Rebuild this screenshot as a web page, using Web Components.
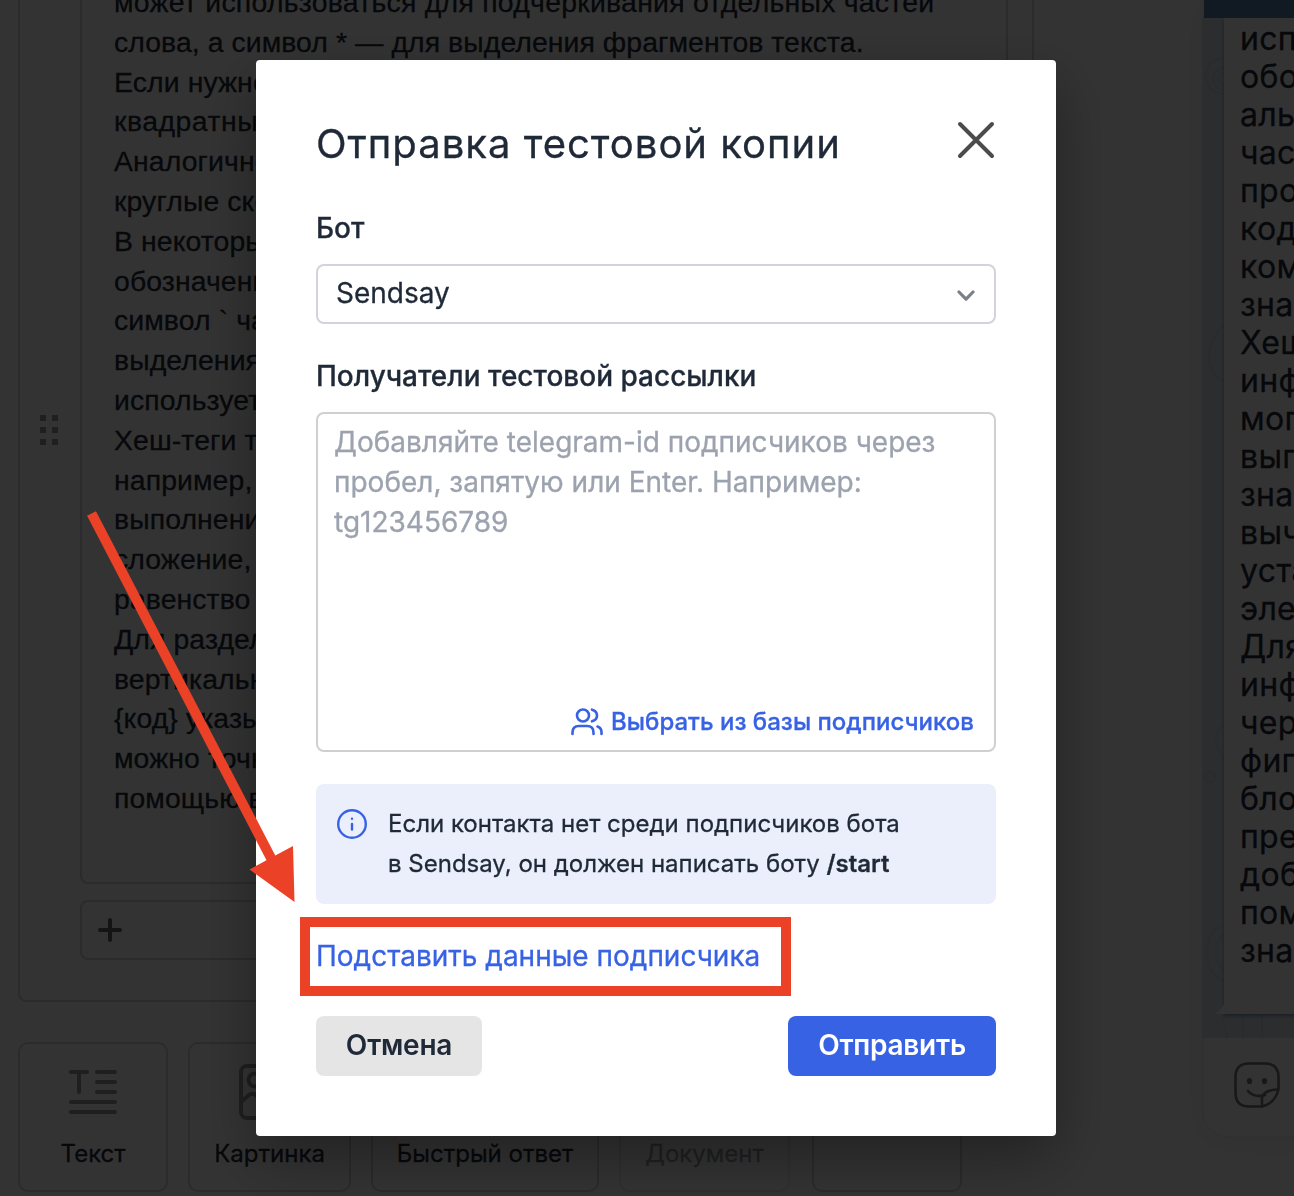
<!DOCTYPE html>
<html lang="ru">
<head>
<meta charset="utf-8">
<title>Отправка тестовой копии</title>
<style>
  html, body { margin: 0; height: 100%; overflow: hidden; }
  body {
    background: #fff;
    color: #1f2937;
    font-family: Inter, "Liberation Sans", sans-serif;
    -webkit-font-smoothing: antialiased;
    -webkit-text-stroke: .3px currentColor;
  }
</style>
</head>
<body>
<app-page>
  <message-editor slot="editor">
    <p style="letter-spacing:.26px">может использоваться для подчеркивания отдельных частей</p>
    <p style="letter-spacing:.07px">слова, а символ * — для выделения фрагментов текста.</p>
    <p>Если нужно</p>
    <p style="letter-spacing:.5px">квадратные</p>
    <p>Аналогично</p>
    <p>круглые скобки</p>
    <p>В некоторых</p>
    <p>обозначения</p>
    <p>символ ` часто</p>
    <p>выделения</p>
    <p>используется</p>
    <p>Хеш-теги также</p>
    <p>например,</p>
    <p>выполнение</p>
    <p>сложение,</p>
    <p>равенство</p>
    <p>Для разделения</p>
    <p>вертикальный</p>
    <p>{код} указывает</p>
    <p>можно точно</p>
    <p>помощью вер</p>
  </message-editor>
  <block-tile slot="tiles" style="width:150px">
    <svg slot="icon" width="48" height="44" viewBox="0 0 48 44" fill="none" stroke="#999" stroke-width="4" stroke-linecap="round"><path d="M2 2h16M10 2v20M28 2h18M28 12h18M28 22h18M2 32h44M2 42h44"/></svg>
    Текст
  </block-tile>
  <block-tile slot="tiles" style="width:163px">
    <svg slot="icon" width="62" height="56" viewBox="0 0 62 56" fill="none" stroke="#999" stroke-width="4" stroke-linecap="round"><rect x="2" y="2" width="58" height="52" rx="6"/><circle cx="16" cy="16" r="6.5"/><path d="M2 38l8-7q4-3 8 1l10 10 14-16q4-3 8 1l10 10"/></svg>
    Картинка
  </block-tile>
  <block-tile slot="tiles" style="width:228px">Быстрый ответ</block-tile>
  <block-tile slot="tiles" style="width:171px" disabled>Документ</block-tile>
  <block-tile slot="tiles" style="width:150px;margin-left:2px"></block-tile>

  <chat-preview slot="preview">
    <p>используется для</p><p>обозначения</p><p>альтернативы</p><p>частей</p><p>программного</p><p>кода или</p><p>команд, а</p><p>знак</p><p>Хеш-теги</p><p>информацию</p><p>могут</p><p>выполнять</p><p>знаки</p><p>вычитание</p><p>установить</p><p>элементы</p><p>Для</p><p>информации</p><p>через</p><p>фигурные</p><p>блоки</p><p>предложения</p><p>добавить</p><p>помощью</p><p>знака</p>
  </chat-preview>
</app-page>

<test-dialog opened>
  <span slot="title">Отправка тестовой копии</span>
  <form-field label="Бот">
    <select-box>Sendsay</select-box>
  </form-field>
  <form-field label="Получатели тестовой рассылки">
    <recipients-box>
      Добавляйте telegram-id подписчиков через<br>пробел, запятую или Enter. Например:<br>tg123456789
      <span slot="action">Выбрать из базы подписчиков</span>
    </recipients-box>
  </form-field>
  <info-note>Если контакта нет среди подписчиков бота<br>в Sendsay, он должен написать боту <b>/start</b></info-note>
  <text-link>Подставить данные подписчика</text-link>
  <app-button slot="actions">Отмена</app-button>
  <app-button slot="actions" primary>Отправить</app-button>
</test-dialog>

<hint-arrow></hint-arrow>

<script>
class BaseElement extends HTMLElement {
  constructor() {
    super();
    this.attachShadow({ mode: 'open' });
    this.shadowRoot.innerHTML = this.render();
  }
  render() { return ''; }
}

class AppPage extends BaseElement {
  render() {
    return /*html*/ `
      <style>
        :host {
          display: grid;
          grid-template-columns: 1016px 300px;
          column-gap: 168px;
          padding-left: 18px;
          height: 1196px;
          width: 1294px;
          box-sizing: border-box;
          overflow: hidden;
        }
        #tiles { display: flex; gap: 20px; margin-top: 40px; }
      </style>
      <div>
        <slot name="editor"></slot>
        <div id="tiles"><slot name="tiles"></slot></div>
      </div>
      <slot name="preview"></slot>
    `;
  }
}

class MessageEditor extends BaseElement {
  render() {
    return /*html*/ `
      <style>
        :host {
          display: flex;
          flex-direction: column;
          gap: 16px;
          box-sizing: border-box;
          margin-top: -45px;
          padding: 20px 24px 40px 0;
          border: 2px solid #d4d4d4;
          border-radius: 8px;
        }
        #row { display: grid; grid-template-columns: 60px 1fr; align-items: center; }
        #handle { display: grid; grid-template-columns: 6px 6px; gap: 6px; padding: 0 0 2px 20px; }
        #handle i { height: 6px; background: #999; }
        #text, #add { box-sizing: border-box; border: 2px solid #d4d4d4; border-radius: 8px; }
        #text {
          height: 907px;
          padding: 4px 32px;
          font: 28.4px/39.79px "Liberation Sans", sans-serif;
          letter-spacing: .1px;
          white-space: nowrap;
        }
        #add { height: 60px; margin-left: 60px; padding: 16px; }
        #add svg { display: block; }
        ::slotted(p) { margin: 0; }
      </style>
      <div id="row">
        <div id="handle"><i></i><i></i><i></i><i></i><i></i><i></i></div>
        <div id="text"><slot></slot></div>
      </div>
      <div id="add">
        <svg width="24" height="24" viewBox="0 0 24 24" stroke="#666" stroke-width="4" stroke-linecap="round"><path d="M2 12h20M12 2v20"/></svg>
      </div>
    `;
  }
}

class BlockTile extends BaseElement {
  render() {
    return /*html*/ `
      <style>
        :host {
          display: flex;
          flex-direction: column;
          align-items: center;
          flex: none;
          box-sizing: border-box;
          height: 150px;
          border: 2px solid #d4d4d4;
          border-radius: 10px;
          font-size: 24px;
          line-height: 30px;
          white-space: nowrap;
        }
        :host([disabled]) { opacity: .45; }
        #icon { display: flex; align-items: center; height: 95px; }
      </style>
      <div id="icon"><slot name="icon"></slot></div>
      <div><slot></slot></div>
    `;
  }
}

class ChatPreview extends BaseElement {
  render() {
    return /*html*/ `
      <style>
        :host { display: flex; flex-direction: column; height: 1138px; box-sizing: border-box; border: 2px solid #f0f0f0; border-top: 0; border-radius: 0 0 0 26px; box-shadow: 0 4px 30px rgba(0, 20, 10, .07); }
        #bar { height: 18px; flex: none; background: #5682a8; }
        #chat { position: relative; display: flex; height: 1020px; background: #d6e1ea; margin-left: -2px; }
        #doodles { position: absolute; left: 0; top: 0; }
        #bubble {
          position: relative;
          flex: 1;
          margin-left: 22px;
          height: 996px;
          box-sizing: border-box;
          padding: 2px 16px;
          background: #fff;
          box-shadow: 0 2px 3px rgba(60, 90, 120, .5);
          font-size: 32px;
          line-height: 38px;
          letter-spacing: .3px;
          white-space: nowrap;
        }
        #tail { position: absolute; left: -10px; bottom: 0; }
        #foot { flex: 1; padding: 24px 30px; }
        ::slotted(p) { margin: 0; }
      </style>
      <div id="bar"></div>
      <div id="chat">
        <svg id="doodles" width="92" height="1020" fill="none" stroke="#cbd8e3" stroke-width="2">
          <circle cx="22" cy="58" r="18"/><circle cx="22" cy="61" r="11"/><circle cx="22" cy="61" r="6"/>
          <path d="M24 305q-17 15-17 34t17 25M24 704q-20 14 0 40"/>
          <circle cx="8" cy="759" r="5"/>
          <path d="M24 907q-19 4-19 27t19 30M24 915q-10 6-10 19t10 20M21 997q0 12 6 26M41 997v26M60 997v26"/>
        </svg>
        <div id="bubble">
          <slot></slot>
          <svg id="tail" width="10" height="10"><path d="M10 0V10H0Q7 7 10 0Z" fill="#fff"/></svg>
        </div>
      </div>
      <div id="foot">
        <svg width="46" height="46" viewBox="0 0 46 46" fill="none" stroke="#777" stroke-width="2.6" stroke-linecap="round" stroke-linejoin="round">
          <path d="M15 1.5h16q13.500 0 13.500 13.500v12q-3 14-16.500 17.500H15Q1.500 44.500 1.500 31V15Q1.500 1.500 15 1.500Z"/>
          <path d="M14 29q6 7 17 4M28 44V36q1-8 16-8.500"/>
          <ellipse cx="15.500" cy="19" rx="1.300" ry="1.800" fill="#777"/><ellipse cx="30.500" cy="19" rx="1.300" ry="1.800" fill="#777"/>
        </svg>
      </div>
    `;
  }
}

class TestDialog extends BaseElement {
  render() {
    return /*html*/ `
      <style>
        :host { display: none; }
        :host([opened]) {
          position: fixed;
          inset: 0;
          display: flex;
          justify-content: center;
          align-items: flex-start;
          padding: 60px 0 0 18px;
          box-sizing: border-box;
          background: rgba(0, 0, 0, .8);
        }
        #modal {
          display: flex;
          flex-direction: column;
          box-sizing: border-box;
          width: 800px;
          height: 1076px;
          padding: 60px;
          background: #fff;
          border-radius: 4px;
          box-shadow: 0 22px 60px rgba(0, 0, 0, .35);
        }
        header { display: flex; justify-content: space-between; height: 88px; }
        h1 {
          margin: 0;
          font-size: 40px;
          font-weight: 400;
          line-height: 48px;
          letter-spacing: 1px;
          white-space: nowrap;
        }
        header svg { margin-right: 1px; margin-top: 1px; }
        footer { display: flex; justify-content: space-between; margin-top: auto; }
      </style>
      <div id="modal">
        <header>
          <h1><slot name="title"></slot></h1>
          <svg width="38" height="38" viewBox="0 0 38 38" stroke="#4b4b4b" stroke-width="4" stroke-linecap="round"><path d="M3 3l32 32M35 3L3 35"/></svg>
        </header>
        <slot></slot>
        <footer><slot name="actions"></slot></footer>
      </div>
    `;
  }
}

class FormField extends BaseElement {
  render() {
    return /*html*/ `
      <style>
        :host { display: block; margin-bottom: 32px; }
        label { display: block; height: 40px; margin-bottom: 16px; font-size: 28px; font-weight: 500; line-height: 40px; }
      </style>
      <label></label>
      <slot></slot>
    `;
  }
  connectedCallback() {
    this.shadowRoot.querySelector('label').textContent = this.getAttribute('label');
  }
}

class SelectBox extends BaseElement {
  render() {
    return /*html*/ `
      <style>
        :host {
          display: flex;
          justify-content: space-between;
          align-items: center;
          box-sizing: border-box;
          height: 60px;
          padding: 0 19px 0 18px;
          border: 2px solid #d1d5db;
          border-radius: 8px;
          font-size: 28px;
          line-height: 56px;
        }
        svg { margin-top: 4px; }
        span { margin-top: -3px; }
      </style>
      <span><slot></slot></span>
      <svg width="18" height="12" viewBox="0 0 18 12" fill="none" stroke="#7b8088" stroke-width="3.200" stroke-linecap="round" stroke-linejoin="round"><path d="M2 2l7 7.200L16 2"/></svg>
    `;
  }
}

class RecipientsBox extends BaseElement {
  render() {
    return /*html*/ `
      <style>
        :host {
          display: flex;
          flex-direction: column;
          justify-content: space-between;
          box-sizing: border-box;
          height: 340px;
          padding: 8px 20px 8px 16px;
          border: 2px solid #d0d0d0;
          border-radius: 8px;
        }
        #text { color: #9ca3af; font-size: 28px; line-height: 40px; white-space: nowrap; }
        #pick {
          display: flex;
          justify-content: flex-end;
          align-items: center;
          gap: 8px;
          color: #3862e4;
          font-size: 24px;
          font-weight: 500;
          line-height: 40px;
          white-space: nowrap;
        }
      </style>
      <div id="text"><slot></slot></div>
      <div id="pick">
        <svg width="32" height="28" viewBox="0 0 32 28" fill="none" stroke="currentColor" stroke-width="2.600" stroke-linecap="round">
          <circle cx="12" cy="7.500" r="6"/>
          <path d="M21 1.700q5 1.300 5 5.800t-5 5.800M1.500 26v-1.500q0-6.500 6.500-6.500h8q6.500 0 6.500 6.500V26M26.500 18.500q4 1.500 4 5.500v2"/>
        </svg>
        <slot name="action"></slot>
      </div>
    `;
  }
}

class InfoNote extends BaseElement {
  render() {
    return /*html*/ `
      <style>
        :host {
          display: flex;
          gap: 20px;
          flex: none;
          box-sizing: border-box;
          height: 120px;
          padding: 20px;
          background: #ebeffb;
          border-radius: 8px;
          font-size: 24px;
          line-height: 40px;
          white-space: nowrap;
        }
        svg { flex: none; margin-top: 4px; }
        ::slotted(b) { font-weight: 600; }
      </style>
      <svg width="32" height="32" viewBox="0 0 32 32" fill="none" stroke="#3862e4" stroke-width="2.400" stroke-linecap="round"><circle cx="16" cy="16" r="13.800"/><path d="M16 16v5.500M16 10.700v.1"/></svg>
      <div><slot></slot></div>
    `;
  }
}

class TextLink extends BaseElement {
  render() {
    return /*html*/ `
      <style>
        :host { display: block; margin-top: 32px; color: #3862e4; font-size: 28px; line-height: 40px; white-space: nowrap; }
      </style>
      <slot></slot>
    `;
  }
}

class AppButton extends BaseElement {
  render() {
    return /*html*/ `
      <style>
        :host {
          display: flex;
          justify-content: center;
          box-sizing: border-box;
          width: 166px;
          height: 60px;
          border-radius: 8px;
          background: #e5e5e5;
          font-size: 28px;
          font-weight: 600;
          line-height: 58px;
          letter-spacing: -.25px;
          -webkit-text-stroke: 0;
        }
        :host([primary]) { width: 208px; background: #3862e4; color: #fff; }
      </style>
      <slot></slot>
    `;
  }
}

// red frame and arrow over the link
class HintArrow extends BaseElement {
  render() {
    return /*html*/ `
      <style>
        :host { position: fixed; inset: 0; pointer-events: none; }
        svg { display: block; }
      </style>
      <svg width="1294" height="1196" viewBox="0 0 1294 1196">
        <rect x="305" y="922" width="481" height="69" fill="none" stroke="#eb4127" stroke-width="10"/>
        <path d="M91.500 513.500L272 860" stroke="#eb4127" stroke-width="10"/>
        <path d="M294.500 902L249.500 869.500L293 846Z" fill="#eb4127"/>
      </svg>
    `;
  }
}

customElements.define('app-page', AppPage);
customElements.define('message-editor', MessageEditor);
customElements.define('block-tile', BlockTile);
customElements.define('chat-preview', ChatPreview);
customElements.define('test-dialog', TestDialog);
customElements.define('form-field', FormField);
customElements.define('select-box', SelectBox);
customElements.define('recipients-box', RecipientsBox);
customElements.define('info-note', InfoNote);
customElements.define('text-link', TextLink);
customElements.define('app-button', AppButton);
customElements.define('hint-arrow', HintArrow);
</script>
</body>
</html>
